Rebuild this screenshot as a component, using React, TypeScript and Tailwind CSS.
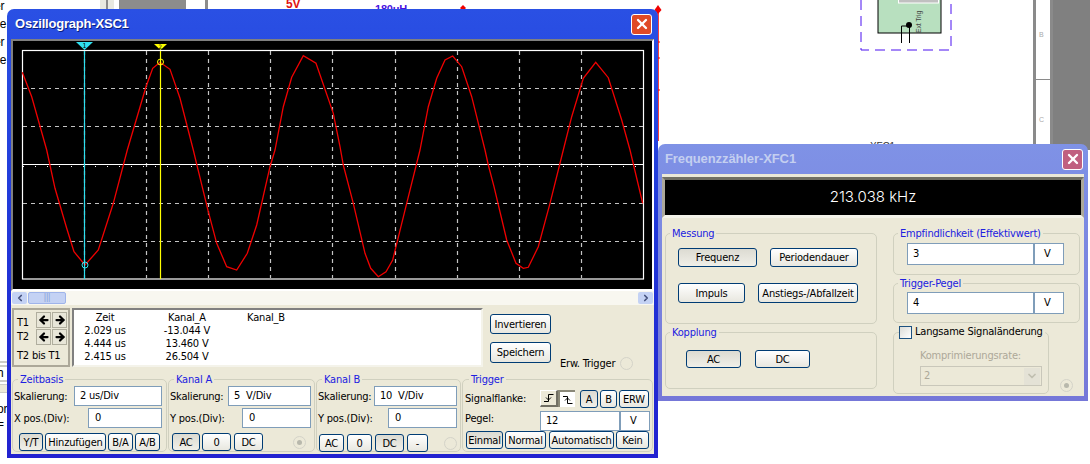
import type { ReactNode } from "react";
import { ArrowLeft, ArrowRight, ChevronDown, ChevronLeft, ChevronRight, X } from "lucide-react";

const font = "font-['DejaVu_Sans_Condensed','DejaVu_Sans',sans-serif] tracking-[-0.2px]";

const wave =
  "22.3,72.3 31.7,96.7 46.7,150 55,188.3 66.7,228.3 74,251.7 85,265 98.3,250 113.3,203.3 127.3,150 146,86.7 152.7,68.3 160,62.3 170,69.3 180,98.3 193.3,150 197.3,166.7 208.3,211.7 216.7,243.3 226.7,266.7 236.7,270 247.3,253.3 256.7,225 270,166.7 275,150 283.3,106.7 291.7,77.3 303.3,55.7 316,63.3 333.3,113.3 340,146.7 343.3,165 353.3,203.3 365,253.3 370.7,268.3 378.3,276.7 386,271.7 392.7,260 406.7,203.3 420,150 428.3,106.7 436.7,78.3 445,60 452.7,56 461.7,66.7 471.7,96.7 485,150 488.3,165 494,186.7 506.7,240 516,263.3 523.3,268.3 528.3,267.3 538.3,246.7 550,203.3 563.3,150 571.7,116.7 583.3,78.3 595.7,62.3 608.3,77.7 621.7,120 630,150 642.7,203.3";

const vLines = [84.5, 146.5, 208.5, 270.5, 332.5, 395.5, 457.5, 519.5, 581.5];
const hLines = [88.5, 126.5, 203.5, 241.5];

function Btn({ w, h = "h-[18px]", active, children }: { w: string; h?: string; active?: boolean; children: ReactNode }) {
  return (
    <button
      className={`${w} ${h} shrink-0 rounded-[3px] border border-[#003c74] flex items-center justify-center text-[11px] text-black leading-none whitespace-nowrap ${
        active ? "bg-gradient-to-b from-[#dcdbd2] to-[#f0efe8]" : "bg-gradient-to-b from-white to-[#e8e7df]"
      }`}
    >
      {children}
    </button>
  );
}

function Field({ w, children, pad = "pl-[5px]" }: { w: string; children: ReactNode; pad?: string }) {
  return (
    <div className={`${w} h-[20px] shrink-0 bg-white border border-[#7f9db9] flex items-center ${pad} text-[11px] text-black`}>
      {children}
    </div>
  );
}

function Group({ title, className, children }: { title: string; className: string; children?: ReactNode }) {
  return (
    <fieldset className={`border border-[#d0d0bf] rounded-[5px] min-w-0 ${className}`}>
      <legend className="ml-[4px] px-[2px] text-[11px] leading-[13px] text-[#2020e0]">{title}</legend>
      {children}
    </fieldset>
  );
}

function Radio({ dot }: { dot?: boolean }) {
  return (
    <span className="w-[13px] h-[13px] shrink-0 rounded-full border border-[#d4d3c8] flex items-center justify-center">
      {dot && <span className="w-[5px] h-[5px] rounded-full bg-[#b8b8ac]" />}
    </span>
  );
}

function Arrows() {
  return (
    <div className="flex gap-[1px]">
      <button className="w-[15px] h-[16px] bg-[#e8e6d8] border border-[#b0ae9e] flex items-center justify-center">
        <ArrowLeft size={12} strokeWidth={4.5} color="#000" />
      </button>
      <button className="w-[15px] h-[16px] bg-[#e8e6d8] border border-[#b0ae9e] flex items-center justify-center">
        <ArrowRight size={12} strokeWidth={4.5} color="#000" />
      </button>
    </div>
  );
}

function Backdrop() {
  return (
    <svg className="absolute inset-0" width="1090" height="464" viewBox="0 0 1090 464">
      <rect x="100" y="0" width="6" height="10" fill="#e8e8e0" />
      <rect x="106" y="0" width="2" height="10" fill="#8a8a8a" />
      <rect x="108" y="0" width="6" height="10" fill="#e8e8e0" />
      <rect x="114" y="0" width="5" height="10" fill="#fff" />
      <rect x="119" y="0" width="67" height="10" fill="#8c8c8c" />
      <rect x="205" y="0" width="3" height="10" fill="#8c8c8c" />
      <text x="286" y="8" fontFamily="Liberation Sans" fontSize="12" fontWeight="700" fill="#e01010">5V</text>
      <text x="375" y="13" fontFamily="Liberation Sans" fontSize="11" fontWeight="700" fill="#4a10e0">180uH</text>
      <path d="M463 5l3 3-3 3-3-3z" fill="#f00000" />
      <path d="M658 8v133" stroke="#f00000" strokeWidth="1.5" />
      <path d="M658 5l3.500 5-3.500 4-3.500-4z" fill="#f00000" />
      <path d="M660 42h-2M660 58h-2M660 90h-2" stroke="#f00000" />

      <path d="M861 0v50h90V0" fill="none" stroke="#4a10f0" strokeWidth="1" strokeDasharray="10 6" />
      <rect x="878" y="-2" width="63" height="35" fill="#b8e0bf" stroke="#000" strokeWidth="1" />
      <rect x="898.5" y="-2" width="40" height="5" fill="#c0c0c0" stroke="#fff" />
      <text transform="translate(921 33) rotate(-90)" fontFamily="Liberation Sans" fontSize="7" fill="#444">Ext Trig</text>
      <circle cx="909" cy="25" r="3" fill="#000" />
      <path d="M901.5 43V26H909M909.5 43V25" fill="none" stroke="#000" />

      <text x="870" y="150" fontFamily="Liberation Sans" fontSize="10" fill="#333">XFC1</text>
      <rect x="1033" y="0" width="3" height="150" fill="#8a8a8a" />
      <rect x="1036" y="79" width="14" height="1" fill="#8a8a8a" />
      <rect x="1050" y="0" width="3" height="150" fill="#8a8a8a" />
      <rect x="1053" y="0" width="37" height="150" fill="#808080" />
      <text x="1039" y="37" fontFamily="Liberation Sans" fontSize="7" fill="#aaa">B</text>
      <text x="1039" y="122" fontFamily="Liberation Sans" fontSize="7" fill="#aaa">C</text>

      <g fontFamily="Liberation Sans" fontSize="12" fill="#000">
        <text x="-6" y="10">er</text>
        <text x="-6" y="28">ce</text>
        <text x="-6" y="46">er</text>
        <text x="-6" y="64">ce</text>
        <text x="-3" y="377">h</text>
        <text x="-3" y="413">or</text>
        <text x="-3" y="428">= F</text>
      </g>
      <path d="M0 362h8M0 366h8M0 381h8M0 385h8M0 392h8" stroke="#9a9a90" />
      <rect x="0" y="385" width="8" height="7" fill="#ece9d8" />
    </svg>
  );
}

function Scope() {
  return (
    <div className="absolute left-[7px] top-[9px] w-[651px] h-[449px] rounded-t-[7px] bg-gradient-to-b from-[#2a50e4] via-[#2036d8] to-[#2222d0] px-[4px] pb-[4px] flex flex-col">
      <div className="h-[30px] shrink-0 flex items-center justify-between pl-[4px] pr-[2px]">
        <span className="text-[13px] tracking-[-0.2px] font-bold text-white font-['Liberation_Sans',sans-serif] [text-shadow:1px_1px_0_#0a1f80]">Oszillograph-XSC1</span>
        <span className="w-[21px] h-[21px] rounded-[3px] border border-white bg-[#e04a26] flex items-center justify-center">
          <X size={16} strokeWidth={3.5} color="#fff" />
        </span>
      </div>

      <div className="flex-1 flex flex-col bg-[#ece9d8]">
        <div className="h-[252px] shrink-0 bg-black border-t-[2px] border-l-[2px] border-[#808080] border-r-[2px] border-r-white border-b-[2px] border-b-white">
          <svg width="639" height="248" viewBox="13 41 639 248">
            <rect x="22.5" y="50.5" width="621" height="228.500" fill="none" stroke="#fff" strokeWidth="1.2" />
            <g stroke="#c4c4c4" strokeWidth="1.2" strokeDasharray="4 4">
              {vLines.map((x) => <path key={x} d={`M${x} 51V278`} />)}
              {hLines.map((y) => <path key={y} d={`M23 ${y}H643`} />)}
            </g>
            <path d="M23 164.5H643" stroke="#fff" strokeWidth="1.2" />
            <path d="M23 166.500H643" stroke="#fff" strokeDasharray="1 11" />
            <polyline points={wave} fill="none" stroke="#f00000" strokeWidth="1.3" />
            <path d="M84.5 51V279" stroke="#30e0f0" strokeWidth="1.2" />
            <path d="M160.5 51V279" stroke="#ffff00" strokeWidth="1.2" />
            <path d="M76 42h17l-8.500 8z" fill="#30e0f0" />
            <path d="M154 44h13l-6.500 6z" fill="#ffff00" />
            <text x="82.5" y="48" fontSize="7" fill="#000">1</text>
            <text x="158.500" y="49" fontSize="6" fill="#000">2</text>
            <circle cx="85" cy="265" r="3" fill="none" stroke="#30e0f0" />
            <circle cx="160.500" cy="62" r="3" fill="none" stroke="#ffff00" />
          </svg>
        </div>

        <div className="h-[14px] shrink-0 flex items-center justify-between bg-[#f8f7f0] px-[1px]">
          <div className="flex gap-[1px]">
            <span className="w-[15px] h-[12px] bg-[#c4d2f4] rounded-[2px] flex items-center justify-center">
              <ChevronLeft size={10} strokeWidth={4} color="#44507c" />
            </span>
            <span className="w-[38px] h-[12px] bg-[#c4d2f4] border border-[#9fb4ea] rounded-[2px] flex items-center justify-center text-[8px] leading-none text-[#7f95d0]">
              |||
            </span>
          </div>
          <span className="w-[15px] h-[12px] bg-[#c4d2f4] rounded-[2px] flex items-center justify-center">
            <ChevronRight size={10} strokeWidth={4} color="#44507c" />
          </span>
        </div>

        <div className="h-[68px] shrink-0 flex pl-[1px] pt-[3px]">
          <div className="w-[58px] h-[59px] border-[2px] border-[#aca899] flex flex-col pl-[3px] text-[11px] leading-none text-black">
            <div className="flex mt-[2px]">
              <div className="w-[19px] flex flex-col">
                <span className="pt-[5px]">T1</span>
                <span className="pt-[3px]">T2</span>
              </div>
              <div className="flex flex-col gap-[1px]">
                <Arrows />
                <Arrows />
              </div>
            </div>
            <span className="mt-[5px]">T2 bis T1</span>
          </div>

          <div className="w-[411px] h-[59px] ml-[2px] bg-white border-2 border-t-[#808080] border-l-[#808080] border-r-[#f4f3ea] border-b-[#f4f3ea] grid grid-cols-[62px_102px_56px] content-start pt-[1px] text-[11px] leading-[13px] text-black text-center">
            <span>Zeit</span><span>Kanal_A</span><span>Kanal_B</span>
            <span>2.029 us</span><span>-13.044 V</span><span />
            <span>4.444 us</span><span>13.460 V</span><span />
            <span>2.415 us</span><span>26.504 V</span><span />
          </div>

          <div className="ml-[7px] flex flex-col gap-[8px] pt-[6px]">
            <Btn w="w-[61px]" h="h-[20px]">Invertieren</Btn>
            <Btn w="w-[61px]" h="h-[21px]">Speichern</Btn>
          </div>
          <div className="ml-[9px] pt-[48px] flex items-center gap-[5px] text-[11px] leading-none h-[62px] text-black">
            <span>Erw. Trigger</span>
            <Radio />
          </div>
        </div>

        <div className="flex-1 flex pl-[1px]">
          <Group title="Zeitbasis" className="w-[155px] h-[79px] pl-[1px] pr-[1px]">
            <Row label="Skalierung:"><Field w="w-[88px]">2 us/Div</Field></Row>
            <Row label="X pos.(Div):" mt="mt-[2px]"><Field w="w-[74px]" pad="pl-[6px]">0</Field></Row>
            <div className="flex gap-[2px] mt-[5px] pl-[5px]">
              <Btn w="w-[24px]" active>Y/T</Btn>
              <Btn w="w-[61px]">Hinzufügen</Btn>
              <Btn w="w-[25px]">B/A</Btn>
              <Btn w="w-[25px]">A/B</Btn>
            </div>
          </Group>
          <Group title="Kanal A" className="w-[147px] h-[79px] ml-[1px] pl-[1px]">
            <Row label="Skalierung:"><Field w="w-[83px]">5 &nbsp;V/Div</Field></Row>
            <Row label="Y pos.(Div):" mt="mt-[2px]"><Field w="w-[69px]" pad="pl-[6px]">0</Field></Row>
            <div className="flex items-center gap-[2px] mt-[5px] pl-[2px]">
              <Btn w="w-[28px]" active>AC</Btn>
              <Btn w="w-[29px]">0</Btn>
              <span className="ml-[1px]"><Btn w="w-[29px]">DC</Btn></span>
              <span className="ml-[28px]"><Radio dot /></span>
            </div>
          </Group>
          <Group title="Kanal B" className="w-[145px] h-[79px] ml-[1px] pl-[1px]">
            <Row label="Skalierung:"><Field w="w-[83px]">10 &nbsp;V/Div</Field></Row>
            <Row label="Y pos.(Div):" mt="mt-[2px]"><Field w="w-[69px]" pad="pl-[6px]">0</Field></Row>
            <div className="flex items-center gap-[3px] mt-[6px] pl-[1px]">
              <Btn w="w-[25px]">AC</Btn>
              <Btn w="w-[25px]">0</Btn>
              <Btn w="w-[29px]" active>DC</Btn>
              <Btn w="w-[21px]">-</Btn>
              <span className="ml-[13px]"><Radio /></span>
            </div>
          </Group>
          <Group title="Trigger" className="w-[191px] h-[79px] ml-[1px] pl-[2px]">
            <div className="flex items-center h-[18px] mt-[4px] text-[11px] text-black">
              <span className="w-[75px]">Signalflanke:</span>
              <span className="w-[18px] h-[17px] -mt-[1px] bg-[#ece9d8] border-t border-l border-white border-r-2 border-b-2 border-r-[#716f64] border-b-[#716f64] flex items-center justify-center">
                <Edge />
              </span>
              <span className="w-[17px] h-[17px] -mt-[1px] bg-white border-t-2 border-l-2 border-[#8a8878] flex items-center justify-center">
                <Edge fall />
              </span>
              <span className="flex gap-[2px] ml-[5px]">
                <Btn w="w-[18px]" active>A</Btn>
                <Btn w="w-[17px]">B</Btn>
                <Btn w="w-[30px]">ERW</Btn>
              </span>
            </div>
            <div className="flex items-center h-[20px] mt-[3px] text-[11px] text-black">
              <span className="w-[75px] pb-[4px]">Pegel:</span>
              <Field w="w-[80px]">12</Field>
              <Field w="w-[30px]" pad="pl-[9px]">V</Field>
            </div>
            <div className="flex pl-[1px]">
              <Btn w="w-[37px]" active>Einmal</Btn>
              <span className="ml-[2px]"><Btn w="w-[41px]">Normal</Btn></span>
              <span className="ml-[3px]"><Btn w="w-[65px]">Automatisch</Btn></span>
              <span className="ml-[2px]"><Btn w="w-[33px]">Kein</Btn></span>
            </div>
          </Group>
        </div>
      </div>
    </div>
  );
}

function Row({ label, mt, children }: { label: string; mt?: string; children: ReactNode }) {
  return (
    <div className={`flex items-center justify-between pr-[3px] text-[11px] text-black ${mt ?? ""}`}>
      <span className="pt-[3px] whitespace-nowrap">{label}</span>
      {children}
    </div>
  );
}

function Edge({ fall }: { fall?: boolean }) {
  return (
    <svg width="12" height="12" viewBox="0 0 12 12" fill="none" stroke="#000">
      {fall ? <path d="M1 2.500h4.500v7h5M3 6.500l2.500-2.500 2.500 2.500" /> : <path d="M1 9.500h4.500v-7h5M3 5.500l2.500 2.500 2.500-2.500" />}
    </svg>
  );
}

function Counter() {
  return (
    <div className="absolute left-[658px] top-[144px] w-[430px] h-[257px] rounded-t-[7px] bg-gradient-to-b from-[#7f92e6] to-[#7577d8] px-[4px] pb-[5px] flex flex-col">
      <div className="h-[30px] shrink-0 flex items-center justify-between pl-[3px] pr-[1px]">
        <span className="text-[13px] tracking-[-0.1px] font-bold text-[#c4cff0] font-['Liberation_Sans',sans-serif]">Frequenzzähler-XFC1</span>
        <span className="w-[21px] h-[21px] rounded-[3px] border border-white bg-[#c06080] flex items-center justify-center">
          <X size={16} strokeWidth={3.5} color="#fff" />
        </span>
      </div>
      <div className="flex-1 bg-[#ece9d8] flex flex-col">
        <div className="h-[41px] mt-[3px] shrink-0 bg-black border-[3px] border-t-[#716f64] border-l-[#aca899] border-r-[#aca899] border-b-[#f4f3ea] flex items-center justify-center text-[15px] tracking-normal font-light text-white font-['Inter',sans-serif]">
          213.038 kHz
        </div>
        <div className="flex-1 flex pl-[3px] pt-[9px] gap-[16px]">
          <div className="w-[212px] flex flex-col gap-[2px]">
            <Group title="Messung" className="h-[97px]">
              <div className="flex gap-[13px] pl-[12px] pt-[8px]">
                <Btn w="w-[79px]" h="h-[19px]" active>Frequenz</Btn>
                <Btn w="w-[88px]" h="h-[19px]">Periodendauer</Btn>
              </div>
              <div className="flex gap-[13px] pl-[12px] pt-[16px]">
                <Btn w="w-[67px]" h="h-[20px]">Impuls</Btn>
                <Btn w="w-[100px]" h="h-[20px]">Anstiegs-/Abfallzeit</Btn>
              </div>
            </Group>
            <Group title="Kopplung" className="h-[63px]">
              <div className="flex gap-[14px] pl-[20px] pt-[11px]">
                <Btn w="w-[55px]" active>AC</Btn>
                <Btn w="w-[55px]">DC</Btn>
              </div>
            </Group>
          </div>
          <div className="w-[187px] flex flex-col gap-[2px]">
            <Group title="Empfindlichkeit (Effektivwert)" className="h-[48px]">
              <div className="flex pl-[13px] pt-[3px]">
                <Field w="w-[127px] !h-[22px]">3</Field>
                <Field w="w-[30px] !h-[22px]" pad="pl-[9px]">V</Field>
              </div>
            </Group>
            <Group title="Trigger-Pegel" className="h-[46px]">
              <div className="flex pl-[13px] pt-[2px]">
                <Field w="w-[127px] !h-[22px]">4</Field>
                <Field w="w-[30px] !h-[22px]" pad="pl-[9px]">V</Field>
              </div>
            </Group>
            <div className="flex items-end">
              <fieldset className="w-[156px] h-[69px] border border-[#d0d0bf] rounded-[5px] min-w-0">
                <legend className="ml-[5px] pr-[2px] flex items-center gap-[3px] text-[11px] leading-[14px] text-black whitespace-nowrap">
                  <span className="w-[13px] h-[13px] border border-[#1c5180] bg-gradient-to-br from-[#dcdcd7] to-white" />
                  Langsame Signaländerung
                </legend>
                <div className="pl-[26px] pt-[10px] text-[11px] leading-[14px] text-[#aca899]">Komprimierungsrate:</div>
                <div className="ml-[26px] mt-[3px] w-[122px] h-[20px] border border-[#c9c7ba] flex items-center justify-between pl-[3px] pr-[1px] text-[11px] text-[#aca899]">
                  2
                  <span className="w-[16px] h-[17px] bg-[#e4e2d6] flex items-center justify-center">
                    <ChevronDown size={12} strokeWidth={3.5} color="#c0bfb0" />
                  </span>
                </div>
              </fieldset>
              <span className="ml-[11px] mb-[2px]"><Radio dot /></span>
            </div>
          </div>
        </div>
      </div>
    </div>
  );
}

export default function App() {
  return (
    <div className={`relative w-[1090px] h-[464px] overflow-hidden bg-white ${font}`}>
      <Backdrop />
      <Scope />
      <Counter />
    </div>
  );
}
